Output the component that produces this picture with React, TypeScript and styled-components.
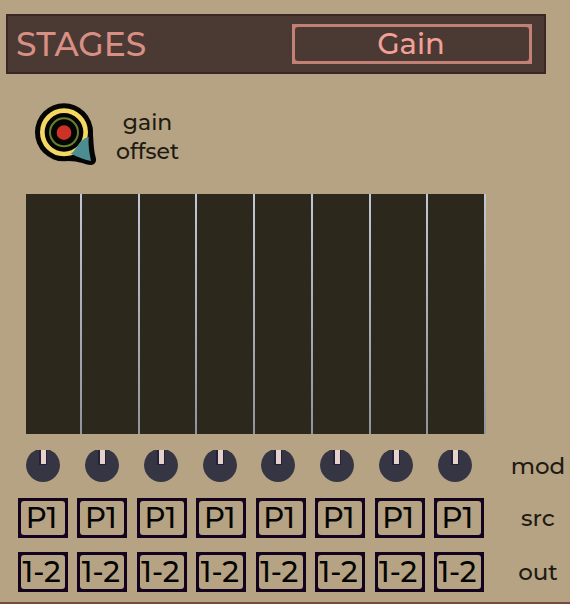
import React, { useState } from "react";
import styled, { createGlobalStyle } from "styled-components";

const GlobalStyle = createGlobalStyle`
  *, *::before, *::after { box-sizing: border-box; }
  body {
    margin: 0;
    background: #b5a384;
    color: #1f1a12;
    font-family: Montserrat, Inter, "Liberation Sans", sans-serif;
    font-weight: 500;
  }
`;

const Panel = styled.main`
  padding-top: 14px;
  border-bottom: 2px solid #764a3c;
`;

const Header = styled.header`
  display: flex;
  align-items: center;
  justify-content: space-between;
  height: 60px;
  margin: 0 24px 0 6px;
  padding: 0 12px 0 8px;
  border: 2px solid #3a2825;
  background: #4a3a33;
`;

const Title = styled.h1`
  margin: 0;
  color: #d98f84;
  font-size: 33px;
  font-weight: 500;
  line-height: 40px;
`;

const SelectFrame = styled.span<{ $tone: "rose" | "ink" }>`
  display: flex;
  height: 40px;
  padding: 3px;
  width: ${({ $tone }) => ($tone === "rose" ? "240px" : "50px")};
  background: ${({ $tone }) => ($tone === "rose" ? "#c18177" : "#13031f")};
`;

const Select = styled.select<{ $tone: "rose" | "ink" }>`
  appearance: none;
  width: 100%;
  margin: 0;
  padding: 0 ${({ $tone }) => ($tone === "rose" ? "2px" : "3px")} 0 0;
  border: 0;
  border-radius: 3px;
  background: ${({ $tone }) => ($tone === "rose" ? "#4a3a33" : "#b5a384")};
  color: ${({ $tone }) => ($tone === "rose" ? "#f3a097" : "#050505")};
  font: inherit;
  font-size: 29px;
  line-height: 34px;
  text-align: center;
  text-align-last: center;
`;

const GainRow = styled.section`
  display: flex;
  align-items: center;
  gap: 14px;
  height: 72px;
  margin: 24px 0;
  padding-left: 30px;
`;

const KnobBox = styled.span<{ $size: number }>`
  position: relative;
  display: block;
  flex: none;
  width: ${({ $size }) => $size}px;
  height: ${({ $size }) => $size}px;

  svg { display: block; width: 100%; height: 100%; }
`;

const KnobInput = styled.input`
  position: absolute;
  inset: 0;
  width: 100%;
  height: 100%;
  margin: 0;
  opacity: 0;
  cursor: pointer;
`;

const GainLabel = styled.label`
  padding-top: 6px;
  font-size: 22px;
  line-height: 29px;
  text-align: center;
`;

const Graph = styled.div`
  display: grid;
  grid-template-columns: 54px repeat(7, 1fr);
  gap: 2px;
  height: 240px;
  margin: 0 84px 0 26px;
  padding-right: 2px;
  background: linear-gradient(#c3c6d4, #92949d);
`;

const Stage = styled.div`
  background: #2c281b;
`;

const Row = styled.div`
  display: flex;
  align-items: center;
`;

const Cells = styled.div<{ $knobs?: boolean }>`
  display: flex;
  flex: 1;
  justify-content: space-between;
  padding: ${({ $knobs }) => ($knobs ? "0 34px 2px 26px" : "0 22px 0 18px")};
`;

const RowLabel = styled.span`
  width: 64px;
  font-size: 23px;
  line-height: 30px;
  text-align: center;
`;

const Controls = styled.section`
  display: flex;
  flex-direction: column;
  gap: 14px;
  padding: 14px 0 10px;
`;

function Picker({ label, options, tone = "ink" }: { label: string; options: string[]; tone?: "rose" | "ink" }) {
  return (
    <SelectFrame $tone={tone}>
      <Select $tone={tone} aria-label={label} defaultValue={options[0]}>
        {options.map((option) => (
          <option key={option}>{option}</option>
        ))}
      </Select>
    </SelectFrame>
  );
}

function GainKnob() {
  const [value, setValue] = useState(50);
  return (
    <KnobBox $size={72}>
      <svg viewBox="0 0 216 216" aria-hidden="true">
        <g style={{ transformOrigin: "102px 104px", transform: `rotate(${(value - 50) * 2.7}deg)` }}>
          <path
            d="M187 90 C191 116 189 145 197 178 C201 192 194 201 182 201 C164 200 148 189 115 189 Z"
            fill="#050505"
          />
          <circle cx="102" cy="103" r="87" fill="#050505" />
          <circle cx="102" cy="103" r="65" fill="none" stroke="#f3d963" strokeWidth="14" />
          <circle cx="102" cy="103" r="42" fill="none" stroke="#66802c" strokeWidth="6" />
          <circle cx="102" cy="104" r="22" fill="#cd3226" />
          <path d="M176 116 C174 140 178 165 183 189 C161 185 143 176 122 167 C140 157 145 125 176 116 Z" fill="#4c8d92" />
        </g>
      </svg>
      <KnobInput id="gain-offset" type="range" value={value} onChange={(e) => setValue(Number(e.target.value))} />
    </KnobBox>
  );
}

function ModKnob({ stage }: { stage: number }) {
  const [value, setValue] = useState(50);
  return (
    <KnobBox $size={34}>
      <svg viewBox="0 0 34 34" aria-hidden="true">
        <path d="M10 2 H24 A17 16.5 0 0 1 34 17 A17 17 0 0 1 0 17 A17 16.5 0 0 1 10 2 Z" fill="#353544" />
        <g style={{ transformOrigin: "17px 17px", transform: `rotate(${(value - 50) * 2.7}deg)` }}>
          <path d="M13 2 H21 V17 H13 Z" fill="#24213a" />
          <path d="M15 2 H20 V16 H15 Z" fill="#e6d2cb" />
        </g>
      </svg>
      <KnobInput
        type="range"
        aria-label={`mod ${stage}`}
        value={value}
        onChange={(e) => setValue(Number(e.target.value))}
      />
    </KnobBox>
  );
}

const stages = [1, 2, 3, 4, 5, 6, 7, 8];

export default function App() {
  return (
    <>
      <GlobalStyle />
      <Panel>
        <Header>
          <Title>STAGES</Title>
          <Picker label="Stage parameter" options={["Gain"]} tone="rose" />
        </Header>
        <GainRow>
          <GainKnob />
          <GainLabel htmlFor="gain-offset">
            gain
            <br />
            offset
          </GainLabel>
        </GainRow>
        <Graph>
          {stages.map((stage) => (
            <Stage key={stage} />
          ))}
        </Graph>
        <Controls>
          <Row>
            <Cells $knobs>
              {stages.map((stage) => (
                <ModKnob key={stage} stage={stage} />
              ))}
            </Cells>
            <RowLabel>mod</RowLabel>
          </Row>
          <Row>
            <Cells>
              {stages.map((stage) => (
                <Picker key={stage} label={`src ${stage}`} options={["P1"]} />
              ))}
            </Cells>
            <RowLabel>src</RowLabel>
          </Row>
          <Row>
            <Cells>
              {stages.map((stage) => (
                <Picker key={stage} label={`out ${stage}`} options={["1-2"]} />
              ))}
            </Cells>
            <RowLabel>out</RowLabel>
          </Row>
        </Controls>
      </Panel>
    </>
  );
}
